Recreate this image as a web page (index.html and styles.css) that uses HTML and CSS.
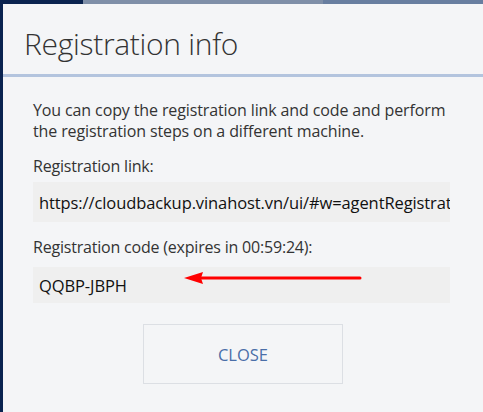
FILE: index.html
```html
<!DOCTYPE html>
<html>
<head>
<meta charset="utf-8">
<link rel="stylesheet" href="styles.css">
</head>
<body>
<div class="topbar">
  <div class="seg seg-a"></div>
  <div class="seg seg-b"></div>
  <div class="seg seg-c"></div>
</div>
<div class="dialog">
  <div class="header">
    <h1 class="title">Registration info</h1>
  </div>
  <div class="content">
    <p class="intro">You can copy the registration link and code and perform the registration steps on a different machine.</p>
    <div class="label">Registration link:</div>
    <div class="field"><span class="field-text">https://cloudbackup.vinahost.vn/ui/#w=agentRegistration&amp;code=QQBP-JBPH</span></div>
    <div class="label label-code">Registration code (expires in 00:59:24):</div>
    <div class="field field-code">
      <span class="field-text">QQBP-JBPH</span>
      <svg class="arrow" width="180" height="14" viewBox="0 0 180 14">
        <line x1="14" y1="7" x2="176" y2="7" stroke="#ff0000" stroke-width="3" stroke-linecap="round"/>
        <polygon points="0,7 19,1 17,7 19,13" fill="#ff0000"/>
      </svg>
    </div>
    <div class="actions">
      <button class="btn">CLOSE</button>
    </div>
  </div>
</div>
</body>
</html>
```
FILE: styles.css
```css
html, body {
  margin: 0;
  padding: 0;
  height: 100%;
}
body {
  background: #0a2350;
  font-family: "Open Sans", "Noto Sans", sans-serif;
  color: #333;
  overflow: hidden;
}
.topbar {
  display: flex;
  height: 4px;
}
.seg-a { width: 83px; background: #0a2350; }
.seg-b { width: 240px; background: #7f8fa8; }
.seg-c { flex: 1; background: #687ea0; }
.dialog {
  margin-left: 3px;
  background: #f4f5f7;
  height: calc(100% - 4px);
}
.header {
  height: 70px;
  border-bottom: 3px solid #b3c4de;
  box-sizing: content-box;
  display: flex;
  align-items: flex-start;
}
.title {
  margin: 20px 0 0 21px;
  font-weight: 300;
  font-size: 30px;
  line-height: 40px;
  color: #333;
  letter-spacing: -0.3px;
}
.content {
  padding: 23px 33px 0 30px;
}
.intro {
  margin: 0;
  font-size: 16px;
  line-height: 21px;
  letter-spacing: -0.12px;
}
.label {
  margin-top: 14px;
  font-size: 16px;
  line-height: 21px;
  letter-spacing: -0.2px;
}
.label-code {
  margin-top: 15px;
}
.field {
  margin-top: 5px;
  height: 40px;
  background: #efefef;
  box-sizing: border-box;
  padding: 0 0 0 6px;
  display: flex;
  align-items: center;
  overflow: hidden;
  white-space: nowrap;
  position: relative;
  color: #111;
  font-size: 16.5px;
}
.field-code {
  height: 36px;
  margin-top: 9px;
}
.field-text {
  letter-spacing: -0.1px;
}
.arrow {
  position: absolute;
  left: 151px;
  top: 4px;
}
.actions {
  display: flex;
  justify-content: center;
  margin-top: 21px;
}
.btn {
  width: 200px;
  height: 60px;
  background: transparent;
  border: 1px solid #dcdfe4;
  font-family: "Open Sans", "Noto Sans", sans-serif;
  font-size: 16.5px;
  color: #4a6ea8;
  margin-left: 3px;
}
```
